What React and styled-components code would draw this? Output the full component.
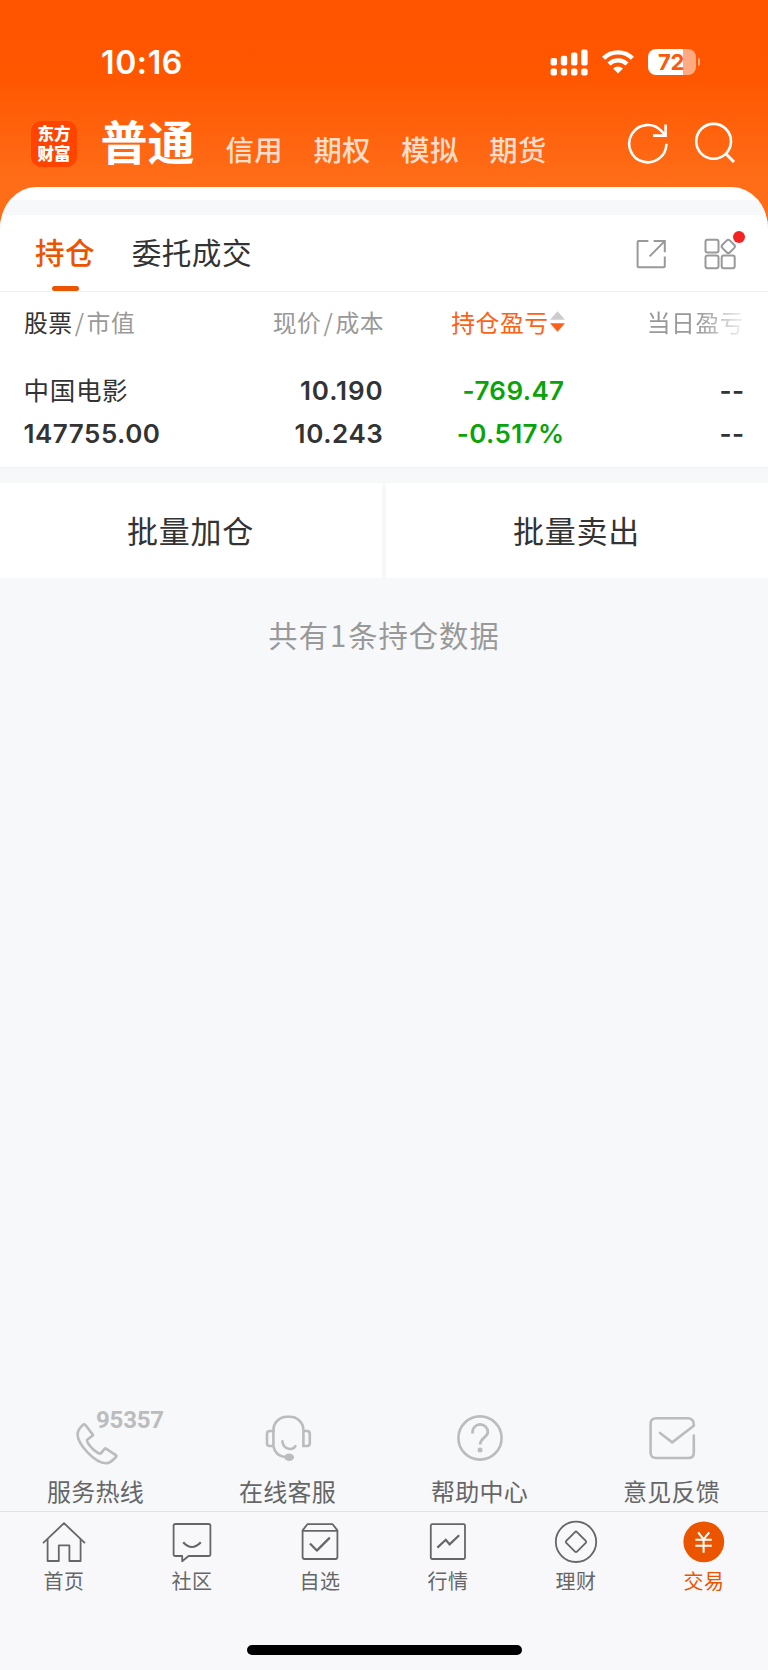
import React, { useState } from 'react';
import styled, { createGlobalStyle } from 'styled-components';

const CJK = '"Noto Sans CJK SC", "Noto Sans", sans-serif';
const NUM = 'Inter, "Liberation Sans", sans-serif';

const accounts = ['信用', '期权', '模拟', '期货'];

const holdings = [
    {
        name: '中国电影',
        value: '147755.00',
        price: '10.190',
        cost: '10.243',
        profit: '-769.47',
        rate: '-0.517%',
        day: '--',
        dayRate: '--',
    },
];

const SignalIcon = () => (
    <svg width="38" height="27" viewBox="0 0 38 27" fill="#fff">
        <rect x="0.6" y="9" width="6.4" height="7.4" rx="2" />
        <rect x="10.8" y="6.8" width="6.4" height="9.6" rx="2" />
        <rect x="21" y="3.6" width="6.4" height="12.8" rx="2" />
        <rect x="31.2" y="0.5" width="6.4" height="15.9" rx="2" />
        <rect x="0.6" y="19.6" width="6.4" height="6.8" rx="2" />
        <rect x="10.8" y="19.6" width="6.4" height="6.8" rx="2" />
        <rect x="21" y="19.6" width="6.4" height="6.8" rx="2" />
        <rect x="31.2" y="19.6" width="6.4" height="6.8" rx="2" />
    </svg>
);

const WifiIcon = () => (
    <svg width="34" height="26" viewBox="0 0 34 26" fill="none" stroke="#fff" strokeWidth="4.4">
        <path d="M2.6 9.2a20.6 20.6 0 0 1 28.8 0" />
        <path d="M8 15a13 13 0 0 1 18 0" />
        <path d="M17 24.4l-4.9-4.9a7.2 7.2 0 0 1 9.8 0z" fill="#fff" stroke="none" />
    </svg>
);

const RefreshIcon = () => (
    <svg width="42" height="42" viewBox="0 0 42 42" fill="none" stroke="#fff" strokeWidth="2.6">
        <path d="M39.4 21.7A18.6 18.6 0 1 1 34.5 9.1L38.4 13.2" />
        <path d="M38.6 2.6V13.6H26" />
    </svg>
);

const SearchIcon = () => (
    <svg width="42" height="42" viewBox="0 0 42 42" fill="none" stroke="#fff" strokeWidth="2.6">
        <circle cx="19.6" cy="19.3" r="17.4" />
        <path d="M31.8 31.8L40 40" strokeWidth="3" />
    </svg>
);

const ShareIcon = () => (
    <svg width="30" height="30" viewBox="0 0 30 30" fill="none" stroke="#999" strokeWidth="2">
        <path d="M12.4 2H2.6Q1.6 2 1.6 3V27.2Q1.6 28.2 2.6 28.2H27.8Q28.8 28.2 28.8 27.2V17.4" />
        <path d="M17.6 2H28.8V13.2M28.4 2.4L13.6 17.4" />
    </svg>
);

const GridIcon = () => (
    <svg width="32" height="32" viewBox="0 0 32 32" fill="none" stroke="#999" strokeWidth="2">
        <rect x="1.5" y="1.8" width="13" height="12.8" rx="2" />
        <rect x="1.5" y="17.5" width="13" height="12.8" rx="2" />
        <rect x="17.7" y="17.5" width="13" height="12.8" rx="2" />
        <rect x="19" y="3.1" width="10.6" height="10.6" rx="2.4" transform="rotate(45 24.3 8.4)" />
    </svg>
);

const SortIcon = () => (
    <svg width="15" height="21" viewBox="0 0 15 21">
        <path d="M7.5 0.2L15 8.8H0z" fill="#ccc" />
        <path d="M7.5 20.8L15 12.2H0z" fill="#ff6014" />
    </svg>
);

const PhoneIcon = () => (
    <svg width="48" height="48" viewBox="0 0 48 48" overflow="visible" fill="none" stroke="#bcbcbe" strokeWidth="2.6" strokeLinejoin="round">
        <path d="M12.2 10.2Q12.8 10.2 13.2 10.8L20.8 20.6Q21.2 21.2 20.6 21.6L15 26Q14.8 28.6 20 34.2Q25.6 39.6 28.6 39.6L32.8 34.6Q33.4 34.2 34 34.6L44.2 41.4Q44.8 42 44.2 42.6Q38.8 49.2 34 49.2C22.6 49 5.6 30 5.6 20.6Q5.6 15.6 11.4 10.6Q11.8 10.2 12.2 10.2z" />
    </svg>
);

const ServiceIcon = () => (
    <svg width="48" height="48" viewBox="0 0 48 48" fill="none" stroke="#bcbcbe" strokeWidth="2.6" strokeLinecap="round">
        <path d="M9.4 17V16.2A13.4 13.4 0 0 1 22.8 2.8H26A13.4 13.4 0 0 1 39.4 16.2V32H43Q45.8 32 45.8 29.2V19.8Q45.8 17 43 17H39.4" />
        <path d="M9.4 17H5.8Q3 17 3 19.8V29.2Q3 32 5.8 32H9.4zM9.4 32Q11 42 22 43.2" />
        <path d="M18.4 27.4C19.6 36.6 29.4 36.2 31.4 32.2" />
        <ellipse cx="25.2" cy="43.2" rx="3.6" ry="2.4" fill="#bcbcbe" />
    </svg>
);

const HelpIcon = () => (
    <svg width="48" height="48" viewBox="0 0 48 48" fill="none" stroke="#bcbcbe" strokeWidth="2.6">
        <circle cx="24" cy="24" r="21.6" />
        <path d="M16.6 19.4V18A7.6 7.6 0 0 1 31.8 18C31.8 23.4 24.2 23.6 24.2 30.6" strokeWidth="2.8" />
        <circle cx="24" cy="36" r="2.5" fill="#bcbcbe" stroke="none" />
    </svg>
);

const MailIcon = () => (
    <svg width="48" height="48" viewBox="0 0 48 48" fill="none" stroke="#bcbcbe" strokeWidth="2.6" strokeLinecap="round" strokeLinejoin="round">
        <path d="M45.8 21.6V38.4Q45.8 44 40.2 44H8.2Q2.6 44 2.6 38.4V9.8Q2.6 4.2 8.2 4.2H39.4Q45.8 4.2 45.8 10.6V11.8L24.2 28.4L12 19" />
    </svg>
);

const HomeIcon = () => (
    <svg width="44" height="44" viewBox="0 0 44 44" fill="none" stroke="#666" strokeWidth="1.8" strokeLinejoin="round">
        <path d="M1 23.2L22 3.2L43 23.2" />
        <path d="M5.6 19V41H16.8V25.4H27.4V41H38.6V19" />
    </svg>
);

const ChatIcon = () => (
    <svg width="44" height="44" viewBox="0 0 44 44" fill="none" stroke="#666" strokeWidth="1.8" strokeLinejoin="round">
        <path d="M5.4 4H38.6Q40.4 4 40.4 5.8V34.2Q40.4 36 38.6 36H18.6L12.2 41.2V36H5.4Q3.6 36 3.6 34.2V5.8Q3.6 4 5.4 4z" />
        <path d="M13.2 22.2Q21.8 31.8 30.8 22.2" strokeWidth="2.2" />
    </svg>
);

const BoxIcon = () => (
    <svg width="44" height="44" viewBox="0 0 44 44" fill="none" stroke="#666" strokeWidth="1.8" strokeLinejoin="round">
        <path d="M4.6 10.4L9.4 4.2H34.6L39.4 10.4V37Q39.4 39 37.4 39H6.6Q4.6 39 4.6 37zM4.6 10.8H39.4" />
        <path d="M12 23.6L18.8 30.6L31.8 17.6" strokeWidth="2.2" />
    </svg>
);

const MarketIcon = () => (
    <svg width="44" height="44" viewBox="0 0 44 44" fill="none" stroke="#666" strokeWidth="1.8">
        <rect x="4.8" y="4.2" width="34.2" height="34.8" rx="1.4" />
        <path d="M11.4 27.6L19.8 19.8L23.6 24.4L33.2 15.2" strokeWidth="2.2" />
    </svg>
);

const WealthIcon = () => (
    <svg width="44" height="44" viewBox="0 0 44 44" fill="none" stroke="#666" strokeWidth="1.8">
        <circle cx="22" cy="21.8" r="20.2" />
        <rect x="14.4" y="14.2" width="15.2" height="15.2" rx="1.4" transform="rotate(45 22 21.8)" />
    </svg>
);

const TradeIcon = () => (
    <svg width="44" height="44" viewBox="0 0 44 44" fill="none" stroke="#fff" strokeWidth="2">
        <circle cx="21.8" cy="21.8" r="20.4" fill="#ec5500" stroke="none" />
        <path d="M16.2 12.4L21.6 19.4L27.2 12.4M13.4 19.8H29.8M13.4 25.8H29.8M21.6 19.4V32.8" />
    </svg>
);

const services = [
    { label: '服务热线', Icon: PhoneIcon, number: '95357' },
    { label: '在线客服', Icon: ServiceIcon },
    { label: '帮助中心', Icon: HelpIcon },
    { label: '意见反馈', Icon: MailIcon },
];

const tabs = [
    { label: '首页', Icon: HomeIcon },
    { label: '社区', Icon: ChatIcon },
    { label: '自选', Icon: BoxIcon },
    { label: '行情', Icon: MarketIcon },
    { label: '理财', Icon: WealthIcon },
    { label: '交易', Icon: TradeIcon },
];

function App() {
    const [view, setView] = useState('持仓');
    const [tab, setTab] = useState('交易');

    return (
        <Page>
            <GlobalStyle />
            <StatusBar>
                <Clock>10:16</Clock>
                <StatusIcons>
                    <SignalIcon />
                    <WifiIcon />
                    <Battery>
                        <BatteryBody>72</BatteryBody>
                        <BatteryCap />
                    </Battery>
                </StatusIcons>
            </StatusBar>
            <Header>
                <Logo>
                    东方
                    <br />
                    财富
                </Logo>
                <Title>普通</Title>
                <Accounts>
                    {accounts.map((name) => (
                        <Account key={name}>{name}</Account>
                    ))}
                </Accounts>
                <HeaderIcons>
                    <RefreshIcon />
                    <SearchIcon />
                </HeaderIcons>
            </Header>
            <Sheet>
                <SheetGap />
                <ViewBar>
                    {['持仓', '委托成交'].map((name) => (
                        <ViewTab key={name} $active={view === name} onClick={() => setView(name)}>
                            {name}
                        </ViewTab>
                    ))}
                    <ViewTools>
                        <ShareIcon />
                        <Dotted>
                            <GridIcon />
                        </Dotted>
                    </ViewTools>
                </ViewBar>
                <TableHead>
                    <HeadCell>
                        <b>股票</b>
                        <i>/</i>市值
                    </HeadCell>
                    <HeadCell $right>
                        现价<i>/</i>成本
                    </HeadCell>
                    <HeadCell $right $sorted>
                        持仓盈亏
                        <SortIcon />
                    </HeadCell>
                    <HeadCell $right $faded>
                        当日盈亏
                    </HeadCell>
                </TableHead>
                {holdings.map((item) => (
                    <Row key={item.name}>
                        <Cell>
                            <StockName>{item.name}</StockName>
                            <Num $spacing="0.5px">{item.value}</Num>
                        </Cell>
                        <Cell $right>
                            <Num $spacing="0.9px">{item.price}</Num>
                            <Num $spacing="0.6px">{item.cost}</Num>
                        </Cell>
                        <Cell $right>
                            <Num $down>{item.profit}</Num>
                            <Num $down>{item.rate}</Num>
                        </Cell>
                        <Cell $right>
                            <Num>{item.day}</Num>
                            <Num>{item.dayRate}</Num>
                        </Cell>
                    </Row>
                ))}
                <Actions>
                    <Action>批量加仓</Action>
                    <Action>批量卖出</Action>
                </Actions>
                <Summary>
                    共有<b>1</b>条持仓数据
                </Summary>
            </Sheet>
            <Services>
                {services.map(({ label, Icon, number }) => (
                    <Service key={label}>
                        <Icon />
                        {number && <Hotline>{number}</Hotline>}
                        <span>{label}</span>
                    </Service>
                ))}
            </Services>
            <TabBar>
                {tabs.map(({ label, Icon }) => (
                    <Tab key={label} $active={tab === label} onClick={() => setTab(label)}>
                        <Icon />
                        <span>{label}</span>
                    </Tab>
                ))}
            </TabBar>
            <HomeArea>
                <HomeIndicator />
            </HomeArea>
        </Page>
    );
}

const GlobalStyle = createGlobalStyle`
    * {
        box-sizing: border-box;
    }
    body {
        margin: 0;
        background: #f7f8fa;
    }
    button {
        border: 0;
        padding: 0;
        background: none;
        font: inherit;
        color: inherit;
        letter-spacing: inherit;
    }
    svg {
        display: block;
        flex: none;
    }
`;
const Page = styled.div`
    display: flex;
    flex-direction: column;
    width: 768px;
    height: 1670px;
    overflow: hidden;
    font-family: ${CJK};
    color: #333;
    background: linear-gradient(#ff5500 0, #ff5600 75px, #ff6d18 180px, #ff6d18 240px, #f7f8fa 240px);
`;
const StatusBar = styled.div`
    display: flex;
    align-items: center;
    justify-content: space-between;
    height: 82px;
    padding: 42px 68px 0 101px;
    color: #fff;
`;
const Clock = styled.div`
    padding-top: 2px;
    font-family: ${NUM};
    font-size: 32px;
    font-weight: 600;
    line-height: 40px;
    letter-spacing: 0.6px;
`;
const StatusIcons = styled.div`
    display: flex;
    align-items: center;
    gap: 13px;
`;
const Battery = styled.div`
    display: flex;
    align-items: center;
    gap: 2px;
`;
const BatteryBody = styled.div`
    width: 48px;
    height: 26px;
    padding-right: 1px;
    border-radius: 8px;
    background: linear-gradient(90deg, #fff 35px, rgba(255, 255, 255, 0.5) 35px);
    color: #fa5a0a;
    font-family: ${NUM};
    font-size: 22px;
    font-weight: 700;
    line-height: 27px;
    text-align: center;
    letter-spacing: -0.3px;
`;
const BatteryCap = styled.div`
    width: 2.5px;
    height: 8px;
    border-radius: 0 4px 4px 0;
    background: rgba(255, 255, 255, 0.5);
`;
const Header = styled.div`
    display: flex;
    align-items: center;
    height: 105px;
    padding: 17px 32px 0 31px;
`;
const Logo = styled.div`
    width: 46px;
    height: 46px;
    margin-top: 1px;
    padding-top: 2px;
    border-radius: 10px;
    background: #ff4400;
    color: #fff;
    font-size: 16.5px;
    font-weight: 900;
    line-height: 20px;
    text-align: center;
`;
const Title = styled.div`
    margin-left: 23.5px;
    font-size: 47px;
    font-weight: 700;
    line-height: 60px;
    color: #fff;
    margin-top: -7px;
`;
const Accounts = styled.div`
    display: flex;
    gap: 30.5px;
    margin: 11px 0 0 31px;
`;
const Account = styled.button`
    font-size: 28.3px;
    font-weight: 500;
    line-height: 36px;
    letter-spacing: 0.4px;
    color: rgba(255, 255, 255, 0.8);
`;
const HeaderIcons = styled.div`
    display: flex;
    gap: 25px;
    margin: 0 0 0 auto;
`;
const Sheet = styled.div`
    flex: 1;
    overflow: hidden;
    padding-top: 13px;
    border-radius: 36px 36px 0 0 / 42px 42px 0 0;
    background: linear-gradient(#fff 100px, #f7f8fa 100px);
`;
const SheetGap = styled.div`
    height: 15px;
    background: #f7f8fa;
`;
const ViewBar = styled.div`
    display: flex;
    height: 77px;
    padding: 0 32px 0 35px;
    gap: 36.5px;
    border-bottom: 1px solid #f0f0f2;
    background: #fff;
`;
const ViewTab = styled.button`
    position: relative;
    padding-bottom: 2px;
    font-size: 29.6px;
    font-weight: ${(props) => (props.$active ? 500 : 400)};
    line-height: 74px;
    letter-spacing: 0.5px;
    color: ${(props) => (props.$active ? '#ec5500' : '#333')};
    &::after {
        content: '';
        display: ${(props) => (props.$active ? 'block' : 'none')};
        position: absolute;
        left: 17px;
        bottom: 0;
        width: 27px;
        height: 5px;
        border-radius: 3px;
        background: #ec5500;
    }
`;
const ViewTools = styled.div`
    display: flex;
    align-items: center;
    gap: 38px;
    margin-left: auto;
    padding-top: 1px;
`;
const Dotted = styled.div`
    position: relative;
    &::after {
        content: '';
        position: absolute;
        top: -7px;
        right: -9px;
        width: 12px;
        height: 12px;
        border-radius: 50%;
        background: #f62324;
    }
`;
const TableHead = styled.div`
    display: grid;
    grid-template-columns: 177px 183px 181px 180px;
    padding: 0 23px 0 24px;
    margin-right: -1px;
    height: 63px;
    background: #fff;
`;
const HeadCell = styled.div`
    display: flex;
    align-items: center;
    justify-content: ${(props) => (props.$right ? 'flex-end' : 'flex-start')};
    height: 58px;
    font-size: 23.8px;
    letter-spacing: 0.5px;
    color: ${(props) => (props.$sorted ? '#ff6014' : '#999')};
    ${(props) => props.$faded && 'padding-right: 1px; mask-image: linear-gradient(90deg, #000 74%, rgba(0, 0, 0, 0.1));'}
    b {
        font-weight: 400;
        color: #333;
    }
    i {
        width: 14px;
        font-style: normal;
        text-align: center;
    }
    svg {
        margin: 1px 0 0 1.5px;
    }
`;
const Row = styled.div`
    display: grid;
    grid-template-columns: 176.5px 183.5px 181px 180px;
    height: 113px;
    padding: 14px 22px 0 23.5px;
    border-bottom: 1px solid #f0f0f2;
    background: #fff;
`;
const Cell = styled.div`
    display: flex;
    flex-direction: column;
    align-items: ${(props) => (props.$right ? 'flex-end' : 'flex-start')};
`;
const StockName = styled.div`
    height: 43px;
    font-size: 25.5px;
    line-height: 40px;
    letter-spacing: 0.7px;
`;
const Num = styled.div`
    font-family: ${NUM};
    font-size: 26px;
    font-weight: 600;
    line-height: 43px;
    letter-spacing: ${(props) => props.$spacing || '0.4px'};
    color: ${(props) => (props.$down ? '#09a409' : '#333')};
`;
const Actions = styled.div`
    display: grid;
    grid-template-columns: 1fr 1fr;
    gap: 4px;
    padding-top: 15px;
    background: #f7f8fa;
`;
const Action = styled.button`
    height: 95px;
    padding: 0 1px 2px 0;
    background: #fff;
    font-size: 31px;
    letter-spacing: 0.8px;
`;
const Summary = styled.div`
    padding-top: 34px;
    font-size: 29.3px;
    line-height: 44px;
    letter-spacing: 1px;
    text-align: center;
    color: #999;
    b {
        margin: 0 1px;
        font-weight: 400;
    }
`;
const Services = styled.div`
    display: grid;
    grid-template-columns: repeat(4, 1fr);
    height: 97px;
    background: #f7f8fa;
`;
const Service = styled.div`
    position: relative;
    display: flex;
    flex-direction: column;
    align-items: center;
    font-size: 24px;
    line-height: 34px;
    letter-spacing: 0.3px;
    color: #666;
    span {
        margin: 12px 1px 0 0;
    }
`;
const Hotline = styled.div`
    position: absolute;
    left: 96px;
    top: -6px;
    font-family: Roboto, sans-serif;
    font-size: 24px;
    font-weight: 700;
    line-height: 24px;
    letter-spacing: -0.2px;
    color: #bcbcbe;
`;
const TabBar = styled.div`
    display: grid;
    grid-template-columns: repeat(6, 1fr);
    height: 98px;
    border-top: 1px solid #e2e2e4;
    background: #f8f8fb;
`;
const Tab = styled.button`
    display: flex;
    flex-direction: column;
    align-items: center;
    padding-top: 8px;
    font-size: 20px;
    line-height: 30px;
    letter-spacing: 0.6px;
    color: ${(props) => (props.$active ? '#ec5500' : '#666')};
    span {
        margin-top: 2px;
    }
`;
const HomeArea = styled.div`
    display: flex;
    justify-content: center;
    height: 61px;
    padding-top: 36px;
    background: #f8f8fb;
`;
const HomeIndicator = styled.div`
    width: 275px;
    height: 10px;
    border-radius: 5px;
    background: #000;
`;

export default App;
